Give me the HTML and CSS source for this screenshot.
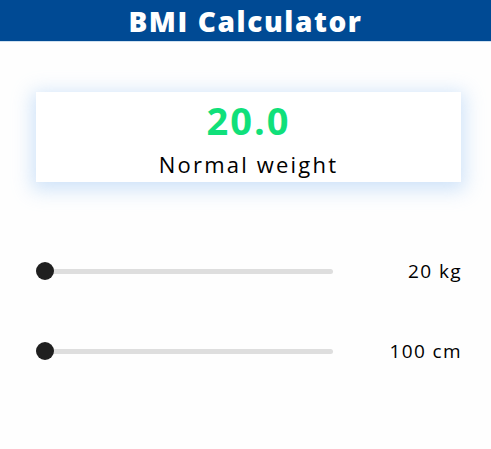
FILE: index.html
```html
<!DOCTYPE html>
<html>
<head>
<meta charset="utf-8">
<link rel="stylesheet" href="styles.css">
</head>
<body>
<header class="topbar"><h1 class="title">BMI Calculator</h1></header>
<main class="content">
  <section class="result-card">
    <div class="bmi-value">20.0</div>
    <div class="bmi-label">Normal weight</div>
  </section>
  <div class="controls">
    <div class="control-row">
      <div class="slider"><div class="track"></div><div class="thumb"></div></div>
      <span class="control-value">20 kg</span>
    </div>
    <div class="control-row">
      <div class="slider"><div class="track"></div><div class="thumb"></div></div>
      <span class="control-value">100 cm</span>
    </div>
  </div>
</main>
</body>
</html>
```
FILE: styles.css
```css
* { box-sizing: border-box; }
html, body { margin: 0; padding: 0; background: #fefefe; }
body { font-family: "Open Sans", "Noto Sans", sans-serif; color: #111; }
.topbar {
  height: 42px;
  background: #004a94;
  border-bottom: 1px solid #cfe0ef;
  display: flex;
  align-items: center;
  justify-content: center;
}
.title {
  margin: 0;
  color: #fff;
  font-size: 28px;
  font-weight: 800;
  letter-spacing: 1.6px;
  line-height: 1;
}
.content { padding: 50px 30px 0 36px; }
.result-card {
  height: 90px;
  background: #fff;
  box-shadow: 0 4px 18px 4px rgba(150, 195, 245, 0.45);
  display: flex;
  flex-direction: column;
  align-items: center;
}
.bmi-value {
  margin-top: 6px;
  font-size: 38px;
  font-weight: 700;
  color: #10e07a;
  letter-spacing: 2px;
  line-height: 44px;
}
.bmi-label {
  margin-top: 9px;
  font-size: 22px;
  letter-spacing: 2.2px;
  line-height: 26px;
  color: #000;
}
.controls {
  margin-top: 80px;
  display: flex;
  flex-direction: column;
  gap: 62px;
}
.control-row {
  display: flex;
  align-items: center;
  height: 18px;
}
.slider {
  position: relative;
  width: 297px;
  height: 18px;
  display: flex;
  align-items: center;
}
.track {
  width: 100%;
  height: 5px;
  border-radius: 3px;
  background: #dedede;
}
.thumb {
  position: absolute;
  left: 0;
  top: 0;
  width: 18px;
  height: 18px;
  border-radius: 50%;
  background: #1f1f1f;
}
.control-value {
  margin-left: auto;
  font-size: 19px;
  letter-spacing: 1.4px;
  color: #000;
  margin-right: -1px;
}
```
